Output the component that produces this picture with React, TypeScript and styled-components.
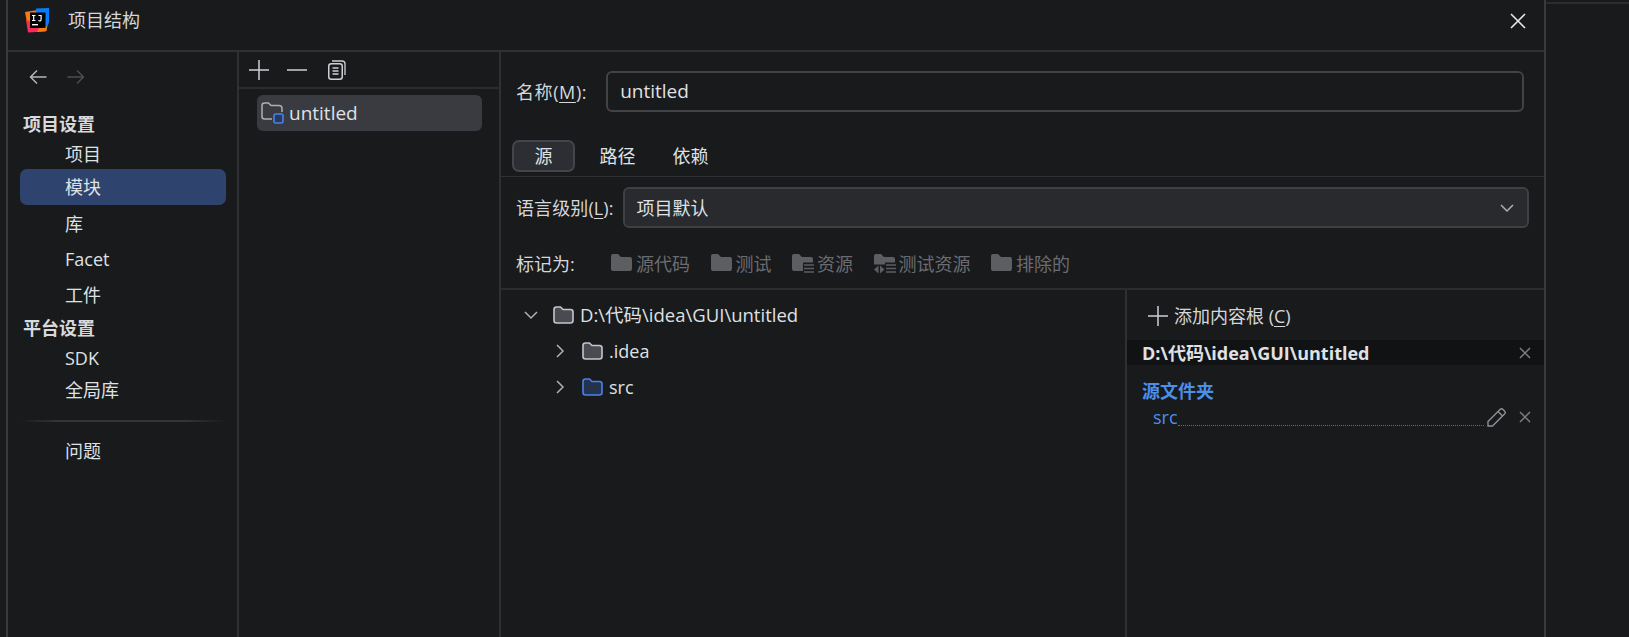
import React from 'react';
import styled, { createGlobalStyle } from 'styled-components';

const GlobalStyle = createGlobalStyle`
  html, body {
    margin: 0;
    height: 100%;
    background: #191a1c;
    overflow: hidden;
  }
  #root {
    height: 100%;
  }
  * {
    box-sizing: border-box;
  }
`;

const Page = styled.div`
  width: 1629px;
  height: 637px;
  display: flex;
  background: #191a1c;
  color: #dfe1e5;
  font-family: "Open Sans", "Noto Sans CJK SC", sans-serif;
  font-size: 18px;
`;

const Gutter = styled.div`
  width: 6px;
`;

const Dialog = styled.div`
  width: 1540px;
  display: flex;
  flex-direction: column;
  border-left: 2px solid #393a3d;
  border-right: 2px solid #393a3d;
`;

const Backdrop = styled.div`
  flex: 1;
  margin-top: 2px;
  border-top: 2px solid #2b2c2f;
`;

const TitleBar = styled.div`
  height: 52px;
  flex: none;
  display: flex;
  align-items: center;
  padding: 0 18px 9px 17px;
  border-bottom: 2px solid #2f3033;
`;

const TitleText = styled.span`
  margin: 0 0 4px 17px;
  flex: 1;
  color: #d5d7db;
`;

const Body = styled.div`
  flex: 1;
  display: flex;
  min-height: 0;
`;

const Sidebar = styled.div`
  width: 231px;
  flex: none;
  display: flex;
  flex-direction: column;
  padding: 0 11px 0 12px;
  border-right: 2px solid #2f3033;
`;

const NavArrows = styled.div`
  height: 52px;
  display: flex;
  align-items: center;
  gap: 20px;
  padding-left: 9px;
  margin-top: -1px;
  margin-bottom: 6px;
`;

const GroupTitle = styled.div<{ $h: number }>`
  height: ${({ $h }) => $h}px;
  display: flex;
  align-items: center;
  padding-left: 3px;
  font-weight: 700;
  color: #d8d9dc;
  line-height: 1;
`;

const NavItem = styled.div<{ $h: number; $active?: boolean }>`
  height: ${({ $h }) => $h}px;
  display: flex;
  align-items: center;
  padding-left: 45px;
  border-radius: 7px;
  background: ${({ $active }) => ($active ? '#2e436e' : 'transparent')};
  color: #dfe1e5;
  line-height: 1;
`;

const NavDivider = styled.div`
  height: 2px;
  margin: 13px 0 12px;
  background: linear-gradient(90deg, #191a1c, #34353a 18%, #34353a 80%, #191a1c);
`;

const ModuleColumn = styled.div`
  width: 262px;
  flex: none;
  display: flex;
  flex-direction: column;
  border-right: 2px solid #2f3033;
`;

const ModuleToolbar = styled.div`
  height: 37px;
  flex: none;
  display: flex;
  align-items: center;
  gap: 18px;
  padding-left: 10px;
  border-bottom: 2px solid #2b2c2f;
`;

const ModuleRow = styled.div`
  height: 36px;
  margin: 6px 17px 0 18px;
  padding-left: 4px;
  display: flex;
  align-items: center;
  gap: 5px;
  border-radius: 6px;
  background: #393b40;
  font-size: 19px;
`;

const Detail = styled.div`
  flex: 1;
  min-width: 0;
  display: flex;
  flex-direction: column;
`;

const NameRow = styled.div`
  height: 88px;
  flex: none;
  display: flex;
  align-items: flex-start;
  padding: 19px 20px 0 15px;
`;

const FieldLabel = styled.span`
  color: #d5d7db;
  line-height: 1;
  flex: none;
  white-space: nowrap;

  u {
    text-underline-offset: 3px;
    text-decoration-thickness: 1px;
  }
`;

const NameLabel = styled(FieldLabel)`
  margin: 12px 19px 0 0;
  letter-spacing: 0.6px;
`;

const NameInput = styled.div`
  flex: 1;
  height: 41px;
  display: flex;
  align-items: center;
  padding-left: 12px;
  border: 2px solid #414347;
  border-radius: 6px;
  line-height: 1;
  font-size: 19px;
`;

const Tabs = styled.div`
  height: 37px;
  flex: none;
  display: flex;
  align-items: flex-start;
  padding-left: 11px;
  border-bottom: 1px solid #2f3033;
`;

const Tab = styled.div<{ $active?: boolean }>`
  width: ${({ $active }) => ($active ? '63px' : '73px')};
  height: 32px;
  margin-right: ${({ $active }) => ($active ? '6px' : '0')};
  display: flex;
  align-items: center;
  justify-content: center;
  line-height: 1;
  border-radius: 7px;
  background: ${({ $active }) => ($active ? '#2c2e33' : 'transparent')};
  border: 2px solid ${({ $active }) => ($active ? '#43454a' : 'transparent')};
`;

const LanguageRow = styled.div`
  height: 62px;
  flex: none;
  display: flex;
  align-items: flex-start;
  padding: 10px 15px 0 15px;
`;

const LanguageLabel = styled(FieldLabel)`
  margin: 12px 9px 0 0;
  letter-spacing: 0.1px;
`;

const Select = styled.div`
  flex: 1;
  height: 41px;
  display: flex;
  align-items: center;
  justify-content: space-between;
  padding: 0 13px 0 12px;
  background: #292a2e;
  border: 2px solid #3e4044;
  border-radius: 6px;
  line-height: 1;
`;

const MarkRow = styled.div`
  height: 51px;
  flex: none;
  display: flex;
  align-items: flex-start;
  padding: 12px 0 0 15px;
  border-bottom: 2px solid #2b2c2f;
`;

const MarkLabel = styled(FieldLabel)`
  margin: 4px 35px 0 0;
  width: 60px;
`;

const MarkItem = styled.div`
  display: flex;
  align-items: center;
  gap: 3px;
  height: 26px;
  margin-right: 20.5px;
  color: #6a6c72;
  line-height: 1;
`;

const ContentSplit = styled.div`
  flex: 1;
  min-height: 0;
  display: flex;
`;

const Tree = styled.div`
  width: 626px;
  flex: none;
  padding-top: 7px;
  border-right: 2px solid #2f3033;
`;

const TreeRow = styled.div<{ $level: number }>`
  height: 36px;
  display: flex;
  align-items: center;
  padding-left: ${({ $level }) => 23 + $level * 29}px;
  line-height: 1;
  font-size: ${({ $level }) => ($level === 0 ? 18.5 : 18)}px;
`;

const RootPanel = styled.div`
  flex: 1;
  min-width: 0;
  display: flex;
  flex-direction: column;
`;

const AddRoot = styled.div`
  height: 50px;
  flex: none;
  display: flex;
  align-items: center;
  gap: 6px;
  padding: 1px 0 0 21px;
  color: #d5d7db;
  line-height: 1;

  u {
    text-underline-offset: 3px;
    text-decoration-thickness: 1px;
  }
`;

const RootHeader = styled.div`
  height: 25px;
  flex: none;
  display: flex;
  align-items: center;
  justify-content: space-between;
  padding: 0 13px 0 15px;
  background: #111214;
  font-weight: 700;
  color: #dfe1e5;
  line-height: 1;
`;

const SourceTitle = styled.div`
  margin: 15px 0 0 15px;
  height: 22px;
  display: flex;
  align-items: center;
  font-weight: 700;
  color: #4c8fe8;
  line-height: 1;
`;

const SourceRow = styled.div`
  height: 28px;
  margin-top: 1px;
  display: flex;
  align-items: center;
  padding: 0 13px 0 26px;
  color: #4c8fe8;
  line-height: 1;
`;

const Leader = styled.span`
  flex: 1;
  align-self: flex-end;
  margin: 0 3px 5px 0;
  height: 1px;
  border-bottom: 1px dotted #6a6c72;
`;

const PencilSlot = styled.span`
  margin-right: 12px;
  flex: none;
`;

const Glyph = styled.svg`
  display: block;
  flex: none;
`;

const Logo = () => (
  <Glyph width="26" height="26" viewBox="0 0 26 26">
    <path d="M0 4 L13 2 L14 20 L3 20 Z" fill="#f97a12" />
    <path d="M11 0.5 L24 0 L24 14 L21 23 L12 24 Z" fill="#087cfa" />
    <path d="M1 12 L16 18 L21 23.5 L3 24.5 Z" fill="#fe2857" />
    <path d="M14 20 L22 18 L21.5 23 L12 24 Z" fill="#f97a12" />
    <rect x="5" y="4.5" width="15.5" height="15.5" fill="#000" />
    <path d="M7 7.5h3.5M8.7 7.5v5M7 12.5h3.5M13.5 7.5h2.6v4a1.4 1.4 0 0 1-2.6.8" stroke="#fff" strokeWidth="1.2" fill="none" />
    <rect x="7" y="16" width="6" height="1.4" fill="#fff" />
  </Glyph>
);

const CloseIcon = ({ size, color, width }: { size: number; color: string; width: number }) => (
  <Glyph width={size} height={size} viewBox={`0 0 ${size} ${size}`}>
    <path d={`M1 1 L${size - 1} ${size - 1} M${size - 1} 1 L1 ${size - 1}`} stroke={color} strokeWidth={width} />
  </Glyph>
);

const ArrowIcon = ({ dir, color }: { dir: 'left' | 'right'; color: string }) => (
  <Glyph width="18" height="16" viewBox="0 0 18 16">
    <path
      d={dir === 'left' ? 'M17.5 8 H1.5 M8 1.5 L1.5 8 L8 14.5' : 'M0.5 8 H16.5 M10 1.5 L16.5 8 L10 14.5'}
      stroke={color}
      strokeWidth="1.5"
      fill="none"
    />
  </Glyph>
);

const PlusIcon = () => (
  <Glyph width="20" height="20" viewBox="0 0 20 20">
    <path d="M0 10 H20 M10 0 V20" stroke="#ced0d6" strokeWidth="1.5" />
  </Glyph>
);

const MinusIcon = () => (
  <Glyph width="23" height="20" viewBox="0 0 23 20">
    <path d="M0 10 H20" stroke="#ced0d6" strokeWidth="1.5" />
  </Glyph>
);

const CopyIcon = () => (
  <Glyph width="18" height="20" viewBox="0 0 18 20">
    <rect x="0.75" y="3.75" width="13.5" height="15.5" rx="2.5" stroke="#ced0d6" strokeWidth="1.5" fill="none" />
    <path d="M4 1 H14 Q17 1 17 4 V15" stroke="#ced0d6" strokeWidth="1.3" fill="none" />
    <path d="M4.5 8 H10.5 M4.5 11 H10.5 M4.5 14 H10.5" stroke="#ced0d6" strokeWidth="1.4" />
  </Glyph>
);

const FolderOutline = ({ stroke, fill }: { stroke: string; fill: string }) => (
  <Glyph width="21" height="18" viewBox="0 0 21 18">
    <path
      d="M1 3.5 Q1 1 3.5 1 H7.5 L10 3.5 H17.5 Q20 3.5 20 6 V14.5 Q20 17 17.5 17 H3.5 Q1 17 1 14.5 Z"
      stroke={stroke}
      strokeWidth="1.6"
      fill={fill}
    />
  </Glyph>
);

const ModuleIcon = () => (
  <Glyph width="23" height="22" viewBox="0 0 23 22">
    <path
      d="M11 17 H3.5 Q1 17 1 14.5 V3.5 Q1 1 3.5 1 H7.5 L10 3.5 H18 Q21 3.5 21 6.5 V10"
      stroke="#aeb0b6"
      strokeWidth="1.5"
      fill="none"
    />
    <rect x="13" y="12" width="9" height="9" rx="2" stroke="#4a82e8" strokeWidth="1.6" fill="#2a3a5c" />
  </Glyph>
);

const folderPaths = {
  plain: 'M0 3 Q0 1 2 1 H7 L10 4 H19 Q21 4 21 6 V16 Q21 18 19 18 H2 Q0 18 0 16 Z',
  lines: 'M0 3 Q0 1 2 1 H7 L10 4 H19 Q21 4 21 6 V9.5 H11 V18 H2 Q0 18 0 16 Z',
  test: 'M0 3 Q0 1 2 1 H7 L10 4 H19 Q21 4 21 6 V9.5 H11 V11.5 H0 Z',
};

const SolidFolder = ({ badge }: { badge?: 'lines' | 'test' }) => (
  <Glyph width="22" height="22" viewBox="0 0 22 22">
    <path d={folderPaths[badge ?? 'plain']} fill="#5d5e62" />
    {badge && <path d="M12 12 H22 M12 15.5 H22 M12 19 H22" stroke="#5d5e62" strokeWidth="1.5" />}
    {badge === 'test' && <path d="M0 16.5 L4.5 12.5 V20.5 Z M6 12.5 L10.5 16.5 L6 20.5 Z" fill="#5d5e62" />}
  </Glyph>
);

const Chevron = ({ open }: { open?: boolean }) => (
  <Glyph width="14" height="14" viewBox="0 0 14 14">
    <path d={open ? 'M1 4 L7 10 L13 4' : 'M4 1 L10 7 L4 13'} stroke="#aeb0b6" strokeWidth="1.5" fill="none" />
  </Glyph>
);

const PencilIcon = () => (
  <Glyph width="20" height="20" viewBox="0 0 20 20">
    <path
      d="M1 14.5 L13 2.5 Q14.5 1 16 2.5 L17.5 4 Q19 5.5 17.5 7 L5.5 19 H1 Z M11 4.5 L15.5 9"
      stroke="#8f9197"
      strokeWidth="1.4"
      fill="none"
    />
  </Glyph>
);

const TreeChevron = styled.span`
  width: 29px;
  flex: none;
`;

const TreeFolder = styled.span`
  margin-right: 6px;
  flex: none;
`;

const App: React.FC = () => (
  <>
    <GlobalStyle />
    <Page>
      <Gutter />
      <Dialog>
        <TitleBar>
          <Logo />
          <TitleText>项目结构</TitleText>
          <CloseIcon size={16} color="#e8e9ec" width={1.6} />
        </TitleBar>
        <Body>
          <Sidebar>
            <NavArrows>
              <ArrowIcon dir="left" color="#b4b6bb" />
              <ArrowIcon dir="right" color="#4b4d51" />
            </NavArrows>
            <GroupTitle $h={30}>项目设置</GroupTitle>
            <NavItem $h={30}>项目</NavItem>
            <NavItem $h={36} $active>模块</NavItem>
            <NavItem $h={37}>库</NavItem>
            <NavItem $h={34}>Facet</NavItem>
            <NavItem $h={37}>工件</NavItem>
            <GroupTitle $h={29}>平台设置</GroupTitle>
            <NavItem $h={31}>SDK</NavItem>
            <NavItem $h={34}>全局库</NavItem>
            <NavDivider />
            <NavItem $h={34}>问题</NavItem>
          </Sidebar>
          <ModuleColumn>
            <ModuleToolbar>
              <PlusIcon />
              <MinusIcon />
              <CopyIcon />
            </ModuleToolbar>
            <ModuleRow>
              <ModuleIcon />
              untitled
            </ModuleRow>
          </ModuleColumn>
          <Detail>
            <NameRow>
              <NameLabel>名称(<u>M</u>):</NameLabel>
              <NameInput>untitled</NameInput>
            </NameRow>
            <Tabs>
              <Tab $active>源</Tab>
              <Tab>路径</Tab>
              <Tab>依赖</Tab>
            </Tabs>
            <LanguageRow>
              <LanguageLabel>语言级别(<u>L</u>):</LanguageLabel>
              <Select>
                项目默认
                <Chevron open />
              </Select>
            </LanguageRow>
            <MarkRow>
              <MarkLabel>标记为:</MarkLabel>
              <MarkItem><SolidFolder />源代码</MarkItem>
              <MarkItem><SolidFolder />测试</MarkItem>
              <MarkItem><SolidFolder badge="lines" />资源</MarkItem>
              <MarkItem><SolidFolder badge="test" />测试资源</MarkItem>
              <MarkItem><SolidFolder />排除的</MarkItem>
            </MarkRow>
            <ContentSplit>
              <Tree>
                <TreeRow $level={0}>
                  <TreeChevron><Chevron open /></TreeChevron>
                  <TreeFolder><FolderOutline stroke="#c4c6cb" fill="#4a4b50" /></TreeFolder>
                  D:\代码\idea\GUI\untitled
                </TreeRow>
                <TreeRow $level={1}>
                  <TreeChevron><Chevron /></TreeChevron>
                  <TreeFolder><FolderOutline stroke="#c4c6cb" fill="#4a4b50" /></TreeFolder>
                  .idea
                </TreeRow>
                <TreeRow $level={1}>
                  <TreeChevron><Chevron /></TreeChevron>
                  <TreeFolder><FolderOutline stroke="#4a82e8" fill="#25324d" /></TreeFolder>
                  src
                </TreeRow>
              </Tree>
              <RootPanel>
                <AddRoot>
                  <PlusIcon />
                  <span>添加内容根 (<u>C</u>)</span>
                </AddRoot>
                <RootHeader>
                  D:\代码\idea\GUI\untitled
                  <CloseIcon size={12} color="#7b7d83" width={1.5} />
                </RootHeader>
                <SourceTitle>源文件夹</SourceTitle>
                <SourceRow>
                  src
                  <Leader />
                  <PencilSlot><PencilIcon /></PencilSlot>
                  <CloseIcon size={12} color="#7b7d83" width={1.5} />
                </SourceRow>
              </RootPanel>
            </ContentSplit>
          </Detail>
        </Body>
      </Dialog>
      <Backdrop />
    </Page>
  </>
);

export default App;
